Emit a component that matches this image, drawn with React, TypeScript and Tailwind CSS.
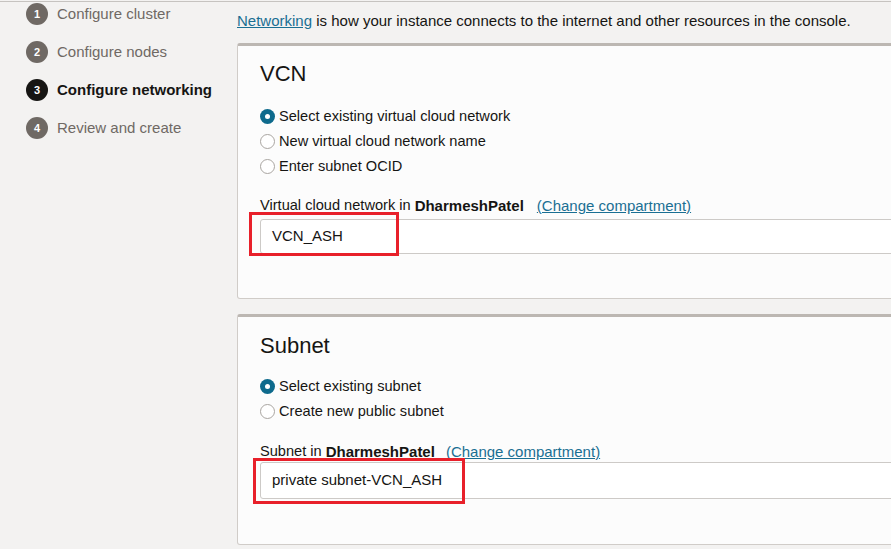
import React from "react";

type Step = { n: number; label: string; active?: boolean };

const steps: Step[] = [
    { n: 1, label: "Configure cluster" },
    { n: 2, label: "Configure nodes" },
    { n: 3, label: "Configure networking", active: true },
    { n: 4, label: "Review and create" },
];

const Radio = ({ checked, label }: { checked?: boolean; label: string }) => (
    <label className="flex items-center h-[25px] text-[14.6px] text-[#161513]">
        {checked ? (
            <span className="w-[15px] h-[15px] rounded-full bg-[#0e6a8c] flex items-center justify-center mr-[4px]">
                <span className="w-[5px] h-[5px] rounded-full bg-white" />
            </span>
        ) : (
            <span className="w-[15px] h-[15px] rounded-full bg-white border border-[#a9a5a1] mr-[4px]" />
        )}
        {label}
    </label>
);

const Field = ({
    prefix,
    owner,
    value,
    linkGap,
    inputHeight,
    markClass,
}: {
    prefix: string;
    owner: string;
    value: string;
    linkGap: string;
    inputHeight: string;
    markClass: string;
}) => (
    <div>
        <div className="flex items-center text-[14.6px] text-[#161513] h-[18px]">
            <span>{prefix}</span>
            <span className="font-bold ml-[4px] text-[15px]">{owner}</span>
            <a href="#" className={"text-[15px] text-[#1a6f93] underline " + linkGap}>
                (Change compartment)
            </a>
        </div>
        <div className="relative">
            <div
                className={
                    "border border-[#cdcac7] bg-white rounded-[3px] flex items-center pl-[11px] text-[15px] text-[#161513] " +
                    inputHeight
                }
            >
                {value}
            </div>
            <div className={"absolute border-[3px] border-[#e8202a] " + markClass} />
        </div>
    </div>
);

export default function App() {
    return (
        <div
            className="w-[891px] h-[549px] overflow-hidden bg-[#f3f2f1] text-[#161513]"
            style={{ fontFamily: '"Liberation Sans", Arial, sans-serif' }}
        >
            <div className="mt-px border-t border-[#c6c3c0]" />
            <div className="flex">
                <div className="w-[237px] shrink-0 pl-[26px] -mt-[7px]">
                    {steps.map((s) => (
                        <div key={s.n} className="flex items-center h-[38px]">
                            <span
                                className={
                                    s.active
                                        ? "w-[22px] h-[22px] rounded-full bg-[#161513] text-white text-[11px] font-bold flex items-center justify-center"
                                        : "w-[22px] h-[22px] rounded-full bg-[#6f6964] text-white text-[11px] font-bold flex items-center justify-center"
                                }
                            >
                                {s.n}
                            </span>
                            <span
                                className={
                                    s.active
                                        ? "ml-[9px] text-[15px] font-bold text-[#161513]"
                                        : "ml-[9px] text-[15px] text-[#6f6964]"
                                }
                            >
                                {s.label}
                            </span>
                        </div>
                    ))}
                </div>
                <div className="flex-1 -mr-[30px] pt-[10px]">
                    <p className="text-[15px] leading-[18px] h-[18px]">
                        <a href="#" className="text-[#1a6f93] underline">
                            Networking
                        </a>{" "}
                        is how your instance connects to the internet and other resources in the console.
                    </p>
                    <section className="mt-[13px] h-[256px] bg-[#fcfcfc] border border-[#d0ccc8] border-t-[3px] border-t-[#bcb7b2] rounded-[3px] pl-[22px] pt-[14px]">
                        <h2 className="text-[22px] leading-[28px]">VCN</h2>
                        <div className="mt-[16px]">
                            <Radio checked label="Select existing virtual cloud network" />
                            <Radio label="New virtual cloud network name" />
                            <Radio label="Enter subnet OCID" />
                        </div>
                        <div className="mt-[18px]">
                            <Field
                                prefix="Virtual cloud network in"
                                owner="DharmeshPatel"
                                value="VCN_ASH"
                                linkGap="ml-[13px]"
                                inputHeight="h-[35px] mt-[4px]"
                                markClass="-left-[11px] -top-[7px] h-[44px] w-[150px]"
                            />
                        </div>
                    </section>
                    <section className="mt-[15px] h-[231px] bg-[#fcfcfc] border border-[#d0ccc8] border-t-[3px] border-t-[#bcb7b2] rounded-[3px] pl-[22px] pt-[15px]">
                        <h2 className="text-[22px] leading-[28px]">Subnet</h2>
                        <div className="mt-[14px]">
                            <Radio checked label="Select existing subnet" />
                            <Radio label="Create new public subnet" />
                        </div>
                        <div className="mt-[19px]">
                            <Field
                                prefix="Subnet in"
                                owner="DharmeshPatel"
                                value="private subnet-VCN_ASH"
                                linkGap="ml-[11px]"
                                inputHeight="h-[37px] mt-[1px]"
                                markClass="-left-[7px] -top-[4px] h-[46px] w-[212px]"
                            />
                        </div>
                    </section>
                </div>
            </div>
        </div>
    );
}
